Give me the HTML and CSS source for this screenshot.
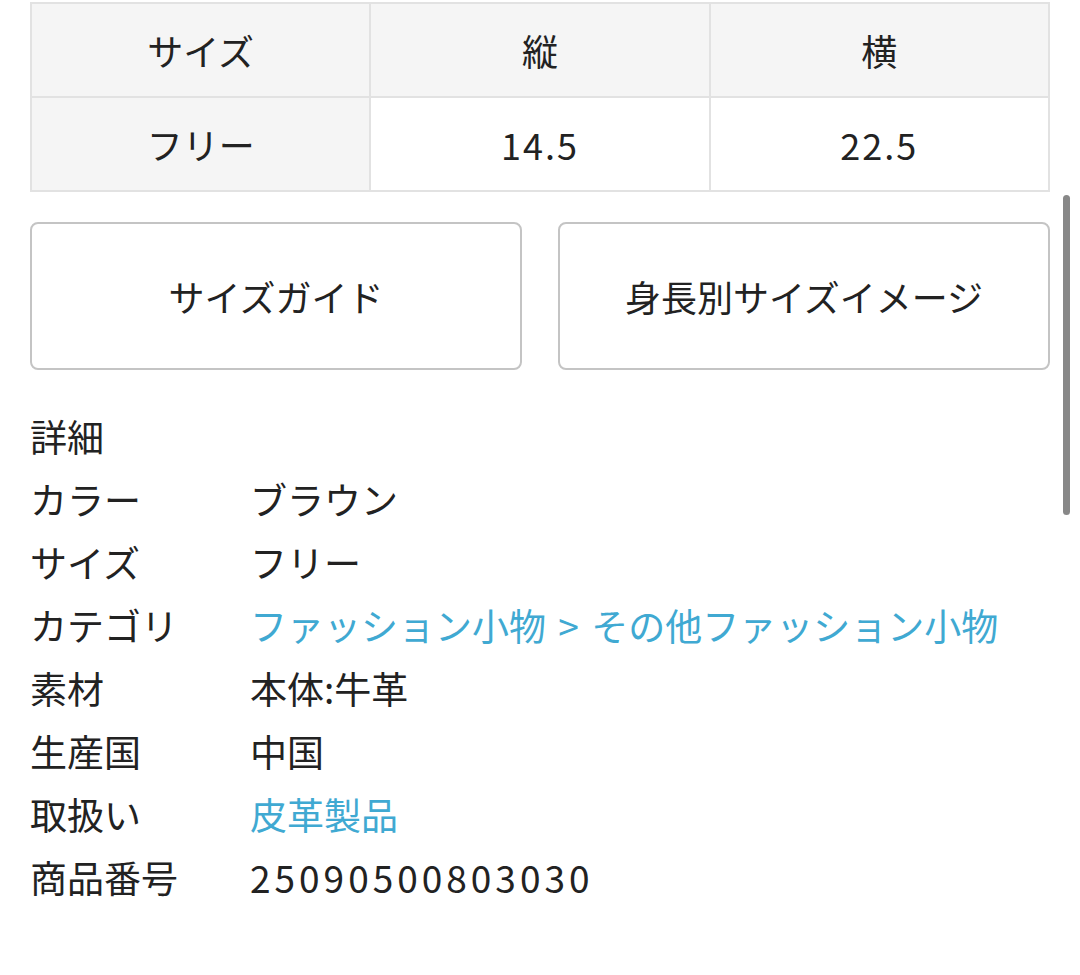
FILE: index.html
```html
<!DOCTYPE html>
<html lang="ja">
<head>
  <meta charset="UTF-8" />
  <meta name="viewport" content="width=device-width, initial-scale=1.0"/>
  <title>商品詳細</title>
  <link rel="stylesheet" href="styles.css">
</head>
<body>
  <main>
    <table class="size-table">
      <tr>
        <th>サイズ</th>
        <th>縦</th>
        <th>横</th>
      </tr>
      <tr>
        <th>フリー</th>
        <td class="num">14.5</td>
        <td class="num">22.5</td>
      </tr>
    </table>

    <div class="guides">
      <button>サイズガイド</button>
      <button>身長別サイズイメージ</button>
    </div>

    <section class="details">
      <h2>詳細</h2>
      <dl>
        <dt>カラー</dt><dd>ブラウン</dd>
        <dt>サイズ</dt><dd>フリー</dd>
        <dt>カテゴリ</dt><dd><a href="#">ファッション小物</a> <a href="#" class="sep">&gt;</a> <a href="#">その他ファッション小物</a></dd>
        <dt>素材</dt><dd>本体:牛革</dd>
        <dt>生産国</dt><dd>中国</dd>
        <dt>取扱い</dt><dd><a href="#">皮革製品</a></dd>
        <dt>商品番号</dt><dd class="num">25090500803030</dd>
      </dl>
    </section>
  </main>

  <div class="scrollbar"></div>
</body>
</html>
```

FILE: styles.css
```css
body {
  font-family: "Noto Sans CJK JP", "Noto Sans", sans-serif;
  color: #222;
  background: #fff;
  margin: 0;
  padding: 2px 30px 0;
}

.size-table {
  width: 100%;
  border-collapse: collapse;
  table-layout: fixed;
  font-size: 36px;
}

.size-table th,
.size-table td {
  height: 92px;
  padding: 0;
  border: 2px solid #e2e2e2;
  text-align: center;
  font-weight: 400;
}

.size-table th {
  background: #f5f5f5;
}

.size-table td {
  background: #fff;
}

.size-table .num {
  letter-spacing: 2px;
}

.guides {
  display: flex;
  gap: 36px;
  margin-top: 30px;
}

.guides button {
  flex: 1;
  height: 148px;
  font-family: inherit;
  font-size: 36px;
  color: #222;
  background: #fff;
  border: 2px solid #c4c4c4;
  border-radius: 8px;
}

.details {
  margin-top: 35px;
  font-size: 37px;
  line-height: 63px;
}

.details h2 {
  margin: 0;
  font-size: inherit;
  font-weight: 400;
}

.details dl {
  display: grid;
  grid-template-columns: 220px 1fr;
  margin: 0;
}

.details dt,
.details dd {
  margin: 0;
}

.details .num {
  letter-spacing: 4px;
}

.details a {
  color: #40a9d2;
  text-decoration: none;
}

.details .sep {
  margin: 0 4px;
}

.scrollbar {
  position: absolute;
  top: 195px;
  left: 1063px;
  width: 7px;
  height: 320px;
  border-radius: 4px;
  background: #888;
}
```
